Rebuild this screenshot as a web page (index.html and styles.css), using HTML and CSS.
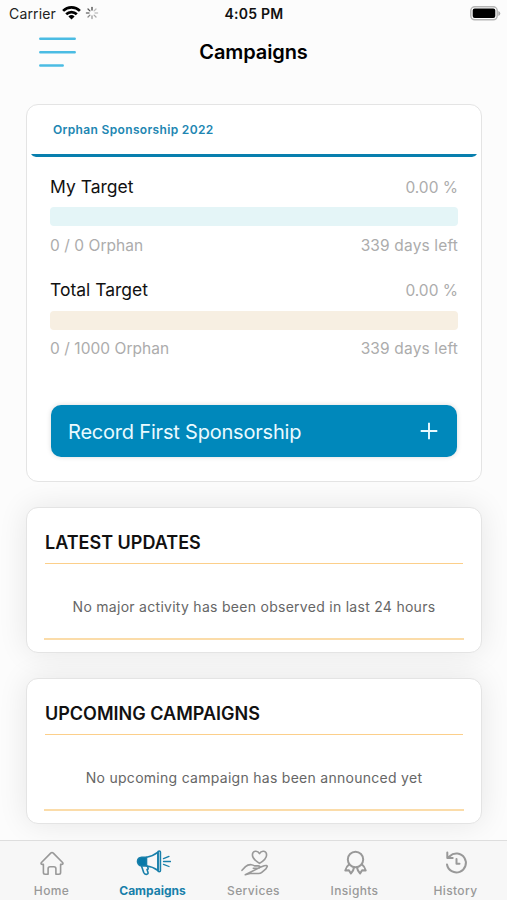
FILE: index.html
```html
<!DOCTYPE html>
<html lang="en">
<head>
<meta charset="utf-8">
<title>Campaigns</title>
<link rel="stylesheet" href="styles.css">
</head>
<body>
<div class="app">
  <header class="status">
    <div class="carrier">
      <span>Carrier</span>
      <svg class="wifi" width="19" height="14" viewBox="0 0 19 14" fill="none" stroke="#000" stroke-width="2.7"><path d="M1.1 4.9a12 12 0 0 1 16.8 0M4.2 8.2a7.6 7.6 0 0 1 10.6 0"/><path d="M9.5 13.6 6.4 10.5a4.5 4.5 0 0 1 6.2 0z" fill="#000" stroke="none"/></svg>
      <svg class="spinner" width="14" height="14" viewBox="-7 -7 14 14" stroke-width="1.3" stroke-linecap="round"><path d="M0-3V-5.6" stroke="#444"/><path d="M2.1-2.1 4-4" stroke="#bbb"/><path d="M3 0H5.6" stroke="#c5c5c5"/><path d="M2.1 2.1 4 4" stroke="#aaa"/><path d="M0 3V5.6" stroke="#999"/><path d="M-2.1 2.1-4 4" stroke="#888"/><path d="M-3 0H-5.6" stroke="#777"/><path d="M-2.1-2.1-4-4" stroke="#555"/></svg>
    </div>
    <div class="time">4:05 PM</div>
    <svg class="battery" width="31" height="15" viewBox="0 0 31 15"><rect x=".8" y=".8" width="26.4" height="13" rx="4" fill="#fff" stroke="#b5b5b5" stroke-width="1.5"/><rect x="2.7" y="2.6" width="22.6" height="9.4" rx="2" fill="#000"/><path d="M28.3 5v5q2-.8 2-2.500t-2-2.500z" fill="#aaa"/></svg>
  </header>
  <div class="titlebar">
    <svg class="menu" width="37" height="30" viewBox="0 0 37 30" stroke="#4bbce3" stroke-width="2.500" stroke-linecap="round"><path d="M1.300 1.800h34.400M1.300 15.200h34.400M1.300 28.600h22.400"/></svg>
    <h1>Campaigns</h1>
  </div>
  <main>
    <section class="card campaign">
      <div class="tab"><span>Orphan Sponsorship 2022</span></div>
      <svg class="underline" width="446" height="3" viewBox="0 0 446 3"><path d="M0 0h446q-1.500 2.800-5 3H5Q1.500 2.800 0 0z" fill="#087fae"/></svg>
      <div class="metric">
        <div class="row head"><b>My Target</b><span>0.00 %</span></div>
        <div class="bar mine"></div>
        <div class="row foot"><span class="count">0 / 0 Orphan</span><span class="days">339 days left</span></div>
      </div>
      <div class="metric">
        <div class="row head"><b>Total Target</b><span>0.00 %</span></div>
        <div class="bar total"></div>
        <div class="row foot"><span class="count">0 / 1000 Orphan</span><span class="days">339 days left</span></div>
      </div>
      <div class="record"><span>Record First Sponsorship</span><svg width="18" height="18" viewBox="0 0 18 18" stroke="#e9faff" stroke-width="1.9"><path d="M9 .7v16.600M.7 9h16.600"/></svg></div>
    </section>
    <section class="card news">
      <h2>LATEST UPDATES</h2>
      <p>No major activity has been observed in last 24 hours</p>
    </section>
    <section class="card news">
      <h2>UPCOMING CAMPAIGNS</h2>
      <p>No upcoming campaign has been announced yet</p>
    </section>
  </main>
  <nav>
    <div class="item">
      <svg width="26" height="26" viewBox="0 0 26 26"><path d="M2.200 12.700 11.700 3.100q1.300-1.300 2.600 0l9.500 9.600q.7 1.600-1.300 1.700h-.9v8.200q0 1.700-1.700 1.700h-3v-5.600q0-2-2-2h-3.800q-2 0-2 2v5.600h-3q-1.700 0-1.700-1.700v-8.200h-.9q-2-.1-1.300-1.700z"/></svg>
      <span>Home</span>
    </div>
    <div class="item active">
      <svg width="36" height="26" viewBox="0 0 36 26"><path d="M11.500 7.300H6.700Q2.800 7.600 2.500 11.300q0 4.200 4.500 4.700h4.500z" fill="#0879a8"/><path d="M11.500 7.300Q17.500 6.500 23 2.200v18.300Q17.500 16.500 11.500 16"/><path d="M23 2q0-1 1.200-1t1.200 1v18.800q0 1-1.200 1t-1.200-1z"/><path d="M6.500 16l2.200 6.500q.8 2 2.600 1.900 2.200-.1 1.700-2L12 19.500l1.200-.5-.6-2.800"/><path d="M28.500 8.700 34 6.400M28.500 11.500h7M28.500 14.300l5.500 2.200" stroke-width="1.300"/></svg>
      <span>Campaigns</span>
    </div>
    <div class="item">
      <svg width="30" height="26" viewBox="0 0 30 26"><path d="M20.500 13.400c-3.500-2.200-7.100-5.200-7.100-8.500 0-4.200 5.200-4.900 7.100-1.300 1.900-3.600 7.100-2.900 7.100 1.300 0 3.300-3.600 6.300-7.100 8.500z"/><path d="M3 20.300 6.500 16.600q2.500-2.200 5.800-1.900 1.700.2 3.200 1.200h3.700q1.700.1 1.600 1.200-.2 1.200-1.900 1.200h-4.600M20.600 17.500l4.600-1.700q2.900-.9 3.100.5l-1.400 2.500-4.100 3.500q-1.500 1.300-3.500 1.200H11l-4.700 1.200z"/></svg>
      <span>Services</span>
    </div>
    <div class="item">
      <svg width="26" height="26" viewBox="0 0 26 26"><circle class="bold" cx="13.500" cy="9.500" r="7.700"/><path class="bold" d="M7 14.500q-2.700 2-3.700 6l3.600-.3 2 3.300q2.500-2.300 3.100-6M20 14.500q2.700 2 3.700 6l-3.600-.3-2 3.300q-2.500-2.300-3.100-6"/></svg>
      <span>Insights</span>
    </div>
    <div class="item">
      <svg width="26" height="26" viewBox="0 0 26 26"><path class="bold" d="M4 14.500a9.500 9.500 0 1 0 2.700-8.300L4.300 8M4.300 2.500V8h5.400M13.500 9v4.800h3"/></svg>
      <span>History</span>
    </div>
  </nav>
</div>
</body>
</html>
```
FILE: styles.css
```css
* { box-sizing: border-box; }
body { margin: 0; font-family: Inter, sans-serif; background: #fcfcfc; color: #111; }
h1, h2, p { margin: 0; }
svg { display: block; flex: none; }
.app { width: 507px; height: 900px; display: flex; flex-direction: column; overflow: hidden; }
.status { height: 28px; flex: none; display: grid; grid-template-columns: 1fr auto 1fr; align-items: center; padding: 0 6px 2px 9px; }
.carrier { display: flex; align-items: center; font-size: 14px; letter-spacing: .15px; color: #222; }
.wifi { margin-left: 6px; }
.spinner { margin-left: 4px; }
.time { font-size: 14px; font-weight: 600; padding-right: 2px; letter-spacing: .25px; }
.battery { justify-self: end; }
.titlebar { height: 76px; flex: none; display: grid; grid-template-columns: 100px 1fr 100px; align-items: start; }
.menu { fill: none; margin: 9px 0 0 39px; }
h1 { font-size: 20px; font-weight: 600; line-height: 49px; text-align: center; color: #000; letter-spacing: -.1px; }
main { flex: none; height: 736px; padding: 0 25px 0 26px; display: flex; flex-direction: column; gap: 25px; }
.card { background: #fff; border: 1px solid #e4e4e4; border-radius: 12px; flex: none; }
.campaign { height: 378px; position: relative; }
.tab { height: 49px; padding: 0 26px; font-size: 12px; font-weight: 600; line-height: 49px; color: #2186b2; letter-spacing: .34px; }
.underline { margin: 0 4px 15px; }
.metric { padding: 0 23px; height: 103.500px; }
.row { display: flex; justify-content: space-between; align-items: center; }
.row span { color: #acacac; font-size: 15.500px; }
.row .count { letter-spacing: .05px; }
.row .days { letter-spacing: .15px; }
.head { height: 30px; }
.head b { font-weight: 400; font-size: 17.500px; line-height: 22px; margin-top: -1px; color: #111; }
.bar { height: 19px; margin-top: 5px; border-radius: 4px; }
.mine { background: #e4f5f7; }
.total { background: #f7efe2; }
.foot { height: 24px; margin-top: 7px; }
.record { margin: 26px 24px 0; height: 52px; border-radius: 10px; background: #0088bb; padding: 0 19px 0 17px; display: flex; align-items: center; justify-content: space-between; color: #e9faff; font-size: 20px; letter-spacing: -.2px; box-shadow: 0 0 5px rgba(0, 0, 0, .15); }
.record span { padding-top: 1px; }
.news { height: 146px; padding: 22px 18px 0; box-shadow: 0 0 30px rgba(0, 0, 0, .09); }
h2 { height: 34px; border-bottom: 1px solid #fccf8a; font-size: 18px; font-weight: 600; line-height: 26px; white-space: nowrap; }
.news p { height: 76px; border-bottom: 2px solid #fbdca9; margin: 0 -1px; line-height: 86px; text-align: center; font-size: 14px; letter-spacing: .28px; color: #666; white-space: nowrap; }
nav { height: 60px; flex: none; position: relative; background: #f7f7f7; border-top: 1px solid #dedede; display: flex; padding: 0 1px; }
.item { flex: 1; display: flex; flex-direction: column; align-items: center; padding-top: 9px; color: #999; font-size: 12px; font-weight: 500; line-height: 16px; letter-spacing: .35px; }
.item span { margin-top: 7px; }
.item svg { fill: none; stroke: currentColor; stroke-width: 1.600; stroke-linejoin: round; stroke-linecap: round; }
.item .bold { stroke-width: 2; }
.active { color: #187faa; font-weight: 700; letter-spacing: 0; }
```
